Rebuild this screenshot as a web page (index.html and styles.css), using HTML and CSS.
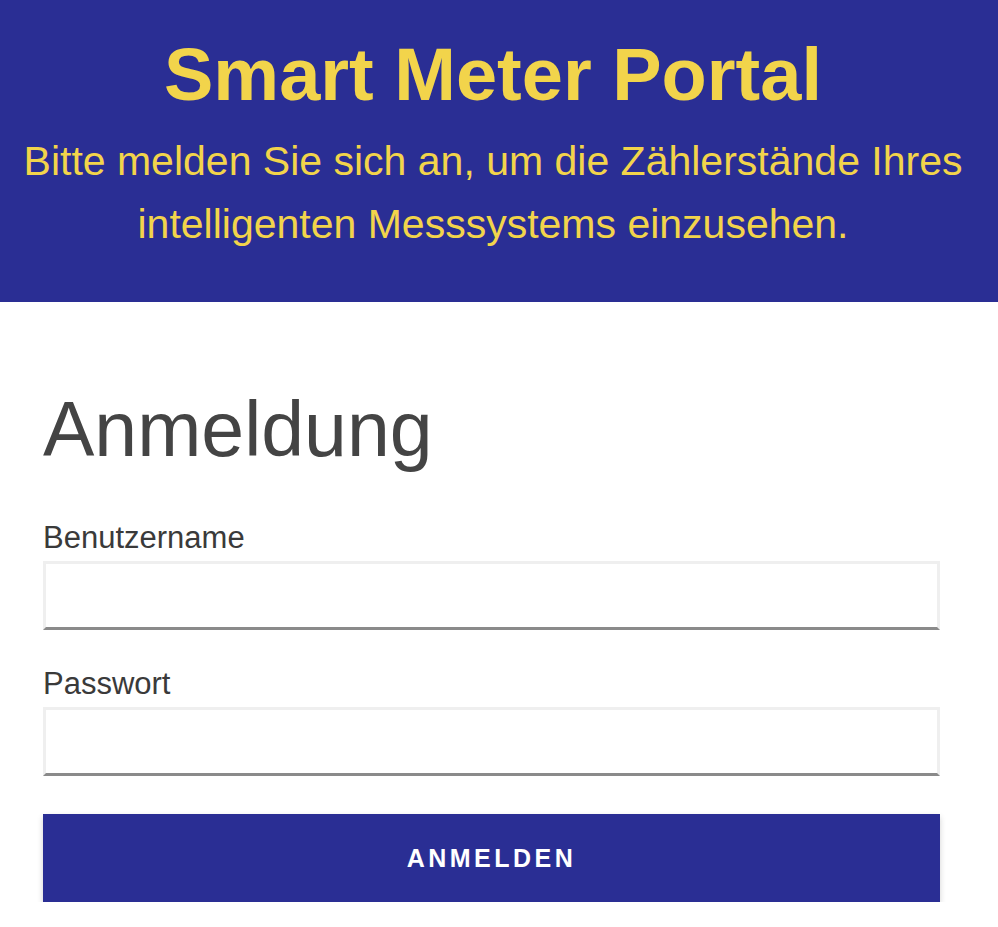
FILE: index.html
```html
<!DOCTYPE html>
<html lang="de">

<head>
  <meta charset="UTF-8">
  <title>Smart Meter Portal</title>
  <link rel="stylesheet" href="styles.css">
</head>

<body>

  <header class="site-header">
    <h1 class="site-title">Smart Meter Portal</h1>
    <p class="site-intro">Bitte melden Sie sich an, um die Zählerstände Ihres intelligenten Messsystems einzusehen.</p>
  </header>

  <main class="login">
    <h2 class="login-title">Anmeldung</h2>

    <form class="login-form" onsubmit="return false;">
      <label class="field-label" for="username">Benutzername</label>
      <input class="field-input" type="text" id="username" name="username" autocomplete="username">

      <label class="field-label field-label-next" for="password">Passwort</label>
      <input class="field-input" type="password" id="password" name="password" autocomplete="current-password">

      <button class="login-button" type="submit">Anmelden</button>
    </form>
  </main>

</body>

</html>
```

FILE: styles.css
```css
body {
  margin: 0;
  font-family: "Liberation Sans", Arial, sans-serif;
  background-color: #ffffff;
  color: #333;
}

.site-header {
  background-color: #2a2e94;
  color: #f2d44b;
  text-align: center;
  padding: 32px 22px 46px 10px;
}

.site-title {
  margin: 0 0 13px;
  font-size: 74px;
  font-weight: bold;
}

.site-intro {
  margin: 0;
  font-size: 41px;
  line-height: 63px;
}

.login {
  padding: 83px 58px 0 43px;
}

.login-title {
  margin: 0 0 46px;
  font-size: 77px;
  font-weight: normal;
  color: #444;
}

.login-form {
  display: flex;
  flex-direction: column;
}

.field-label {
  font-size: 31px;
  line-height: 35px;
  color: #3a3a3a;
  margin-bottom: 6px;
}

.field-label-next {
  margin-top: 36px;
}

.field-input {
  height: 69px;
  box-sizing: border-box;
  border: 3px solid #efefef;
  border-bottom-color: #8a8a8a;
  background-color: #ffffff;
  font-size: 24px;
  padding: 0 12px;
  outline: none;
}

.login-button {
  margin-top: 38px;
  height: 88px;
  border: none;
  background-color: #2a2e94;
  color: #ffffff;
  font-family: inherit;
  font-size: 25px;
  font-weight: bold;
  letter-spacing: 3.5px;
  text-transform: uppercase;
  box-shadow: 0 3px 6px rgba(0, 0, 0, 0.18);
  cursor: pointer;
}

.login-button:hover {
  background-color: #23277f;
}
```
